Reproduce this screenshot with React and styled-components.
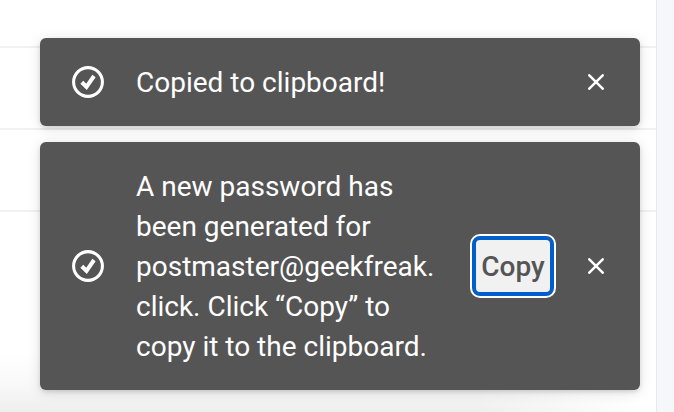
import React from "react";
import styled, { createGlobalStyle } from "styled-components";

const GlobalStyle = createGlobalStyle`
  * { box-sizing: border-box; }
  body {
    margin: 0;
    background: #ffffff;
    font-family: Roboto, "Liberation Sans", sans-serif;
  }
`;

const Page = styled.div`
  position: relative;
  display: grid;
  grid-template-columns: 1fr 18px;
  min-height: 100vh;
  overflow: hidden;
`;

const List = styled.main`
  display: flex;
  flex-direction: column;
`;

const ListRow = styled.div`
  height: ${({ $first }) => ($first ? "48px" : "82px")};
  border-bottom: 2px solid #f1f1f1;
`;

const ListEnd = styled.div`
  flex: 1;
  background:
    linear-gradient(to left, #ffffff 20px, rgba(255, 255, 255, 0) 180px),
    linear-gradient(to top, #eeeeee 0, #f9f9f9 28px, #ffffff 60px);
`;

const Gutter = styled.aside`
  border-left: 1px solid #e8e8f0;
  background: #f6f7fa;
`;

const ToastStack = styled.section`
  position: absolute;
  top: 38px;
  left: 40px;
  right: 34px;
  display: flex;
  flex-direction: column;
  gap: 16px;
`;

const Toast = styled.div`
  display: flex;
  align-items: center;
  padding: 23px 28px 23px 32px;
  border-radius: 6px;
  background: #555555;
  color: #ffffff;
  box-shadow: 0 2px 4px rgba(0, 0, 0, 0.12), 0 2px 14px rgba(0, 0, 0, 0.12);
`;

const StatusIcon = styled.svg`
  flex: none;
  width: 32px;
  height: 32px;
  margin-right: 32px;
`;

const Message = styled.p`
  flex: 1;
  min-width: 0;
  margin: 0;
  padding-top: 2px;
  font-size: 28px;
  line-height: 40px;
`;

const CopyButton = styled.button`
  flex: none;
  width: 82px;
  height: 60px;
  margin: 0 26px 0 32px;
  padding: 2px 0 0;
  border: 4px solid #005fcc;
  border-radius: 8px;
  outline: 2px solid #ffffff;
  background: #f1f1f1;
  color: #555555;
  font-family: inherit;
  font-size: 28px;
  font-weight: 500;
  line-height: 40px;
`;

const CloseButton = styled.button`
  display: grid;
  place-items: center;
  flex: none;
  width: 32px;
  height: 32px;
  padding: 0;
  border: 0;
  background: transparent;
  color: inherit;
`;

function CheckCircle() {
  return (
    <StatusIcon viewBox="0 0 32 32" fill="none" stroke="#fff" aria-hidden="true">
      <circle cx="16" cy="16" r="14.4" strokeWidth="3.1" />
      <path d="M9.8 16.2 14.5 20.8 22 10" strokeWidth="4" />
    </StatusIcon>
  );
}

function Close() {
  return (
    <CloseButton type="button" aria-label="Close">
      <svg width="16" height="16" viewBox="0 0 16 16" fill="none" stroke="currentColor" strokeWidth="2.5" strokeLinecap="round">
        <path d="M1.3 1.3 14.7 14.7M14.7 1.3 1.3 14.7" />
      </svg>
    </CloseButton>
  );
}

export default function App() {
  return (
    <>
      <GlobalStyle />
      <Page>
        <List>
          <ListRow $first />
          <ListRow />
          <ListRow />
          <ListEnd />
        </List>
        <Gutter />
        <ToastStack aria-label="Notifications">
          <Toast role="status">
            <CheckCircle />
            <Message>Copied to clipboard!</Message>
            <Close />
          </Toast>
          <Toast role="status">
            <CheckCircle />
            <Message>
              A new password has been generated for postmaster@geekfreak.<wbr />click. Click “Copy” to copy it to the clipboard.
            </Message>
            <CopyButton type="button">Copy</CopyButton>
            <Close />
          </Toast>
        </ToastStack>
      </Page>
    </>
  );
}
